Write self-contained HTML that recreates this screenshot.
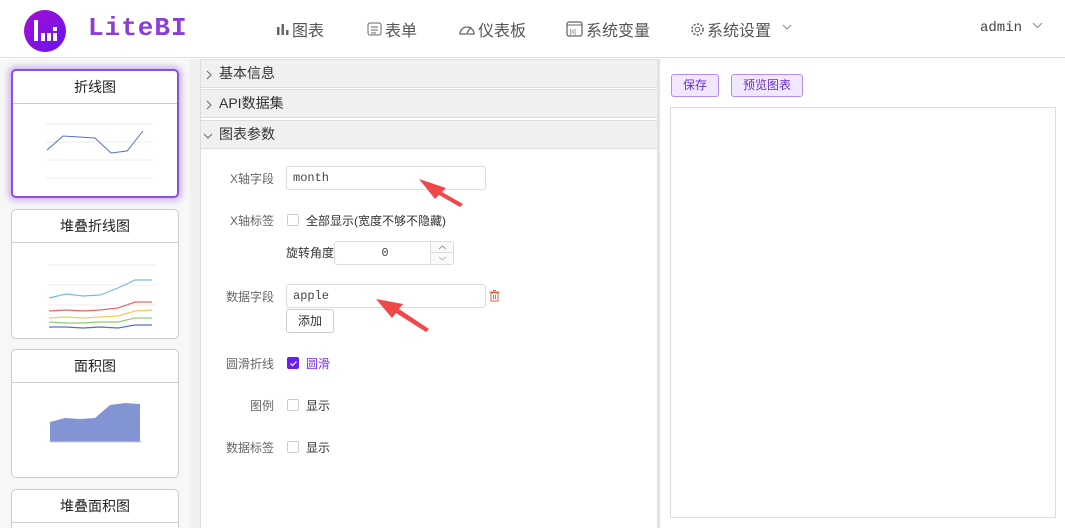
<!DOCTYPE html>
<html><head><meta charset="utf-8"><style>
*{box-sizing:border-box;margin:0;padding:0}
html,body{width:1065px;height:528px;overflow:hidden}
body{background:#fff;font-family:"Liberation Sans","Noto Sans CJK SC",sans-serif;font-size:13px;color:#333;position:relative}
.hdr{position:absolute;left:0;top:0;width:1065px;height:58px;border-bottom:1px solid #ddd;background:#fff}
.logo{position:absolute;left:24px;top:10px;width:42px;height:42px;border-radius:50%;background:linear-gradient(135deg,#a40fd0,#6a12f0)}
.brand{position:absolute;left:88px;top:13px;font-family:"Liberation Mono",monospace;font-weight:bold;font-size:26px;color:#8a3ed8;letter-spacing:1px}
.nav{position:absolute;top:17px;font-size:16px;color:#555;display:flex;align-items:center;gap:2px}
.side{position:absolute;left:0;top:59px;width:190px;height:469px;background:#f7f7f7;overflow:hidden}
.sb{position:absolute;left:190px;top:59px;width:10px;height:469px;background:#f0f0f0}
.card{position:absolute;left:11px;width:168px;background:#fff;border:1px solid #ccc;border-radius:5px;overflow:hidden}
.card .t{height:33px;border-bottom:1px solid #ccc;text-align:center;line-height:32px;font-size:14px;color:#222}
.card.sel{border:2px solid #8a4fe0;box-shadow:0 0 6px 3px rgba(150,90,230,.4)}
.mid{position:absolute;left:200px;top:59px;width:457px;height:469px;background:#fff;border-left:1px solid #ddd}
.ch{position:absolute;left:0;width:457px;height:29px;background:#f0f0f0;border-bottom:1px solid #ddd;border-top:1px solid #ddd;font-size:14px;line-height:27px;padding-left:18px;color:#333}
.ch svg{position:absolute;left:4px;top:10px}
.lbl{position:absolute;width:73px;text-align:right;color:#666;font-size:12px}
.inp{position:absolute;border:1px solid #dcdcdc;border-radius:3px;height:24px;font-family:"Liberation Mono",monospace;font-size:12px;line-height:22px;padding-left:6px;color:#444}
.cb{position:absolute;width:12px;height:12px;border:1px solid #ccc;border-radius:2px;background:#fff}
.txt{position:absolute;font-size:12px;color:#333}
.vs{position:absolute;left:657px;top:59px;width:3px;height:469px;background:#e4e4e4}
.right{position:absolute;left:660px;top:59px;width:405px;height:469px;background:#fff}
.btn{position:absolute;top:15px;height:23px;border:1px solid #b88cf5;background:#f1e8ff;border-radius:3px;color:#6b2fc8;font-size:12px;line-height:21px;text-align:center}
</style></head><body>
<div class="hdr">
 <div class="logo"><svg width="42" height="42"><g fill="#fff"><rect x="10" y="10" width="4" height="21"/><rect x="17" y="23" width="4" height="8"/><rect x="23" y="23" width="4" height="8"/><rect x="29" y="23" width="4" height="8"/><rect x="29" y="17" width="4" height="4"/></g></svg></div>
 <div class="brand">LiteBI</div>
 <div class="nav" style="left:276px"><svg width="14" height="14"><g fill="#666"><rect x="1" y="5" width="2.5" height="8"/><rect x="5.5" y="2" width="2.5" height="11"/><rect x="10" y="8" width="2.5" height="5"/></g></svg>图表</div>
 <div class="nav" style="left:367px"><svg width="16" height="16"><rect x="1" y="2" width="13" height="12" rx="2" fill="none" stroke="#666"/><g stroke="#666"><line x1="4" y1="6" x2="11" y2="6"/><line x1="4" y1="9" x2="11" y2="9"/><line x1="4" y1="12" x2="9" y2="12"/></g></svg>表单</div>
 <div class="nav" style="left:458px"><svg width="18" height="16"><path d="M2 13 A7 7 0 1 1 16 13 Z" fill="none" stroke="#666" stroke-width="1.3"/><line x1="9" y1="12" x2="13" y2="6" stroke="#666" stroke-width="1.3"/></svg>仪表板</div>
 <div class="nav" style="left:566px"><svg width="18" height="16"><rect x="1" y="1" width="15" height="14" rx="2" fill="none" stroke="#666" stroke-width="1.3"/><line x1="1" y1="4" x2="16" y2="4" stroke="#666"/><text x="3.5" y="12.5" font-size="6" fill="#666" font-family="Liberation Sans">[x]</text></svg>系统变量</div>
 <div class="nav" style="left:690px"><svg width="15" height="15"><circle cx="7.5" cy="7.5" r="5.5" fill="none" stroke="#666" stroke-width="1.6" stroke-dasharray="2.2 1.4"/><circle cx="7.5" cy="7.5" r="2.3" fill="none" stroke="#666"/></svg>系统设置</div>
 <svg style="position:absolute;left:782px;top:24px" width="10" height="6"><polyline points="1,1 5,5 9,1" fill="none" stroke="#888"/></svg>
 <div style="position:absolute;left:980px;top:20px;font-family:'Liberation Mono',monospace;font-size:14px;color:#444">admin</div>
 <svg style="position:absolute;left:1032px;top:22px" width="11" height="7"><polyline points="1,1 5.5,5.5 10,1" fill="none" stroke="#888"/></svg>
</div>
<div class="side">
 <div class="card sel" style="top:10px;height:129px"><div class="t">折线图</div>
  <svg width="164" height="92"><g stroke="#eee"><line x1="33" y1="20" x2="140" y2="20"/><line x1="33" y1="38" x2="140" y2="38"/><line x1="33" y1="56" x2="140" y2="56"/><line x1="33" y1="74" x2="140" y2="74"/></g><polyline points="34,46 50,32 66,33 82,34 98,49 114,47 130,27" fill="none" stroke="#5470c6" stroke-width="1"/></svg></div>
 <div class="card" style="top:150px;height:130px"><div class="t">堆叠折线图</div>
  <svg width="166" height="96"><g stroke="#eee"><line x1="36" y1="22" x2="145" y2="22"/><line x1="36" y1="42" x2="145" y2="42"/><line x1="36" y1="62" x2="145" y2="62"/></g><g fill="none" stroke-width="1.2"><polyline points="37,55 54,51 71,53 88,52 106,45 123,37 140,37" stroke="#73c0de"/><polyline points="37,68 54,67 71,68 88,67 106,65 123,59 140,59" stroke="#ee6666"/><polyline points="37,75 54,74 71,75 88,74 106,73 123,68 140,67" stroke="#fac858"/><polyline points="37,79 54,80 71,80 88,79 106,79 123,75 140,75" stroke="#91cc75"/><polyline points="37,84 54,84 71,85 88,84 106,85 123,82 140,82" stroke="#5470c6"/></g></svg></div>
 <div class="card" style="top:290px;height:129px"><div class="t">面积图</div>
  <svg width="166" height="94"><polygon points="38,39 53,35 68,36 83,35 98,22 113,20 128,21 128,59 38,59" fill="#8294d4"/><line x1="38" y1="59" x2="130" y2="59" stroke="#ccc"/></svg></div>
 <div class="card" style="top:430px;height:60px"><div class="t">堆叠面积图</div></div>
</div>
<div class="sb"></div>
<div class="mid">
 <div class="ch" style="top:0"><svg width="8" height="10"><polyline points="2,1 6,5 2,9" fill="none" stroke="#666"/></svg>基本信息</div>
 <div class="ch" style="top:30px"><svg width="8" height="10"><polyline points="2,1 6,5 2,9" fill="none" stroke="#666"/></svg>API数据集</div>
 <div class="ch" style="top:61px"><svg width="10" height="8" style="left:2px;top:11px"><polyline points="1,2 5,6 9,2" fill="none" stroke="#666"/></svg>图表参数</div>
 <div class="lbl" style="left:0;top:111px">X轴字段</div>
 <div class="inp" style="left:85px;top:107px;width:200px">month</div>
 <div class="lbl" style="left:0;top:153px">X轴标签</div>
 <div class="cb" style="left:86px;top:155px"></div>
 <div class="txt" style="left:105px;top:153px">全部显示(宽度不够不隐藏)</div>
 <div class="txt" style="left:85px;top:185px">旋转角度</div>
 <div class="inp" style="left:133px;top:182px;width:120px;text-align:center;padding-right:24px">0</div>
 <div style="position:absolute;left:229px;top:183px;width:23px;height:22px;border-left:1px solid #ddd;background:#fafafa">
  <div style="height:11px;border-bottom:1px solid #ddd;position:relative"><svg style="position:absolute;left:7px;top:3px" width="9" height="5"><polyline points="1,4 4.5,1 8,4" fill="none" stroke="#999"/></svg></div>
  <div style="position:relative"><svg style="position:absolute;left:7px;top:3px" width="9" height="5"><polyline points="1,1 4.5,4 8,1" fill="none" stroke="#bbb"/></svg></div></div>
 <div class="lbl" style="left:0;top:229px">数据字段</div>
 <div class="inp" style="left:85px;top:225px;width:200px">apple</div>
 <svg style="position:absolute;left:288px;top:231px" width="11" height="12"><g fill="none" stroke="#e06040"><line x1="0.5" y1="2" x2="10.5" y2="2"/><rect x="2" y="3" width="7" height="8"/><line x1="4" y1="0.5" x2="7" y2="0.5"/><line x1="4.5" y1="5" x2="4.5" y2="9"/><line x1="6.5" y1="5" x2="6.5" y2="9"/></g></svg>
 <div style="position:absolute;left:85px;top:250px;width:48px;height:24px;border:1px solid #ccc;border-radius:3px;text-align:center;line-height:22px;font-size:12px">添加</div>
 <div class="lbl" style="left:0;top:296px">圆滑折线</div>
 <div class="cb" style="left:86px;top:298px;background:#6a1ff0;border-color:#6a1ff0"><svg style="position:absolute;left:1px;top:1px" width="9" height="9"><polyline points="1.5,4.5 3.5,6.5 7.5,2.5" fill="none" stroke="#fff" stroke-width="1.2"/></svg></div>
 <div class="txt" style="left:105px;top:296px;color:#7a2af0">圆滑</div>
 <div class="lbl" style="left:0;top:338px">图例</div>
 <div class="cb" style="left:86px;top:340px"></div>
 <div class="txt" style="left:105px;top:338px">显示</div>
 <div class="lbl" style="left:0;top:380px">数据标签</div>
 <div class="cb" style="left:86px;top:382px"></div>
 <div class="txt" style="left:105px;top:380px">显示</div>
 <svg style="position:absolute;left:210px;top:115px" width="60" height="35"><polygon points="8,5 35,14 31,18 52,30 49,33 28,21 24,25" fill="#f04848"/></svg>
 <svg style="position:absolute;left:170px;top:232px" width="70" height="45"><polygon points="5,8 32,13 28,18 58,38 55,41 25,22 21,27" fill="#f04848"/></svg>
</div>
<div class="vs"></div>
<div class="right">
 <div class="btn" style="left:11px;width:48px">保存</div>
 <div class="btn" style="left:71px;width:72px">预览图表</div>
 <div style="position:absolute;left:10px;top:48px;width:386px;height:411px;border:1px solid #ddd"></div>
</div>
</body></html>
